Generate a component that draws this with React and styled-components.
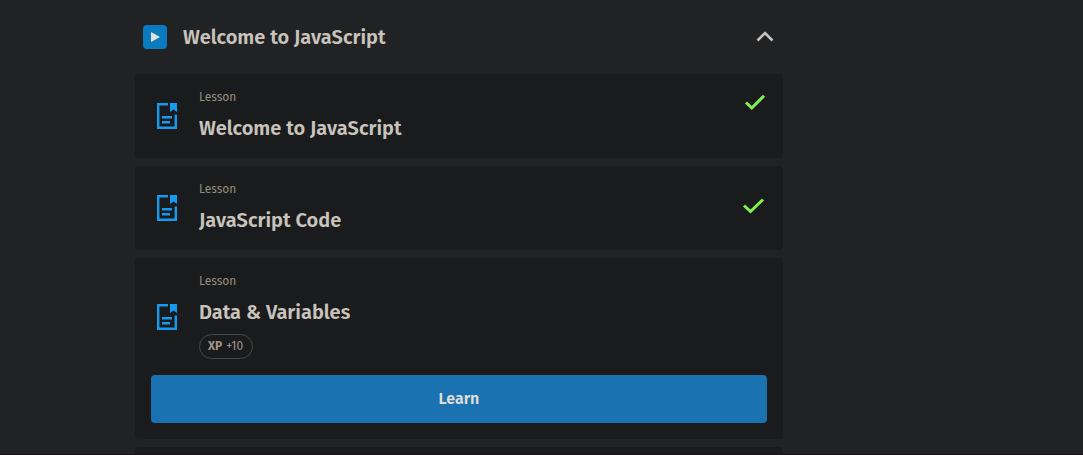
import React, { useState } from "react";
import styled, { createGlobalStyle } from "styled-components";

const GlobalStyle = createGlobalStyle`
  *, *::before, *::after { box-sizing: border-box; }
  html { height: 100%; }
  body {
    margin: 0;
    height: 100%;
    overflow: hidden;
    background: #202223;
    color: #c8c3bc;
    font-family: "Fira Sans", "Noto Sans", sans-serif;
  }
  #root { height: 100%; }
`;

const Page = styled.main`
  height: 100%;
  overflow: hidden;
  padding: 0 300px 0 135px;
  border-bottom: 1px solid #1a1216;
`;

const SectionToggle = styled.button`
  display: flex;
  align-items: center;
  gap: 16px;
  width: 100%;
  height: 74px;
  padding: 0 8px;
  border: 0;
  background: none;
  color: inherit;
  font: inherit;
  text-align: left;
  cursor: pointer;
`;

const PlayBadge = styled.span`
  display: flex;
  flex: none;
  width: 24px;
  height: 24px;
  border-radius: 4px;
  background: #0b7bbf;
`;

const Title = styled.span`
  flex: 1;
  font-size: 20px;
  font-weight: 600;
  line-height: 28px;
`;

const Chevron = styled.svg`
  flex: none;
  width: 20px;
  height: 20px;
  transform: ${({ $open }) => ($open ? "none" : "rotate(180deg)")};
`;

const LessonList = styled.ul`
  display: flex;
  flex-direction: column;
  gap: 8px;
  margin: 0;
  padding: 0;
  list-style: none;
`;

const Card = styled.li`
  display: flex;
  flex-direction: column;
  gap: 16px;
  min-height: 84px;
  padding: 16px;
  border-radius: 4px;
  background: #1a1b1c;
`;

const CardRow = styled.div`
  display: flex;
  align-items: center;
  gap: 16px;
`;

const LessonIcon = styled.svg`
  flex: none;
  width: 32px;
  height: 32px;
`;

const CardText = styled.div`
  display: flex;
  flex: 1;
  flex-direction: column;
  align-items: flex-start;
`;

const Kind = styled.span`
  margin-bottom: 10px;
  color: #968c7e;
  font-size: 12px;
  line-height: 14px;
`;

const LessonTitle = styled.h2`
  margin: 0;
  font-size: 20px;
  font-weight: 600;
  line-height: 28px;
`;

const XpBadge = styled.span`
  display: flex;
  align-items: center;
  gap: 4px;
  height: 25px;
  margin-top: 8px;
  padding: 0 9px 2px 8px;
  border: 1px solid #45494b;
  border-radius: 13px;
  color: #9f9689;
  font-size: 12px;
  line-height: 16px;
`;

const CheckMark = styled.svg`
  flex: none;
  align-self: ${({ $top }) => ($top ? "flex-start" : "center")};
  width: 24px;
  height: 24px;
`;

const LearnButton = styled.button`
  height: 48px;
  padding: 0 16px 2px;
  border: 0;
  border-radius: 4px;
  background: #1b72b1;
  color: #e0ddd9;
  font-family: inherit;
  font-size: 16px;
  font-weight: 600;
  cursor: pointer;
`;

const lessons = [
  { title: "Welcome to JavaScript", done: true, checkAtTop: true },
  { title: "JavaScript Code", done: true },
  { title: "Data & Variables", xp: 10 },
];

function DocumentIcon() {
  return (
    <LessonIcon viewBox="0 0 32 32" aria-hidden="true">
      <path d="M17 4.200H7.200V27.800H24.800V14.500" fill="none" stroke="#149af0" strokeWidth="2.4" />
      <path d="M19 3H26V12L22.5 9.5L19 12Z" fill="#149af0" />
      <path d="M11 17.200H21M11 22.200H19" stroke="#149af0" strokeWidth="2.400" />
    </LessonIcon>
  );
}

function Check({ top }) {
  return (
    <CheckMark $top={top} viewBox="0 0 24 24" role="img" aria-label="Completed">
      <path
        d={top ? "M3 12.5L8.800 18L21 5.800" : "M1 9.500L7.500 15.500L20 3.500"}
        fill="none"
        stroke="#83f052"
        strokeWidth="3"
      />
    </CheckMark>
  );
}

function Lesson({ lesson }) {
  return (
    <Card>
      <CardRow>
        <DocumentIcon />
        <CardText>
          <Kind>Lesson</Kind>
          <LessonTitle>{lesson.title}</LessonTitle>
          {lesson.xp && (
            <XpBadge>
              <b>XP</b>
              <span>+{lesson.xp}</span>
            </XpBadge>
          )}
        </CardText>
        {lesson.done && <Check top={lesson.checkAtTop} />}
      </CardRow>
      {lesson.xp && <LearnButton type="button">Learn</LearnButton>}
    </Card>
  );
}

export default function App() {
  const [open, setOpen] = useState(true);
  return (
    <>
      <GlobalStyle />
      <Page>
        <SectionToggle type="button" aria-expanded={open} onClick={() => setOpen(!open)}>
          <PlayBadge>
            <svg width="24" height="24" viewBox="0 0 24 24" aria-hidden="true">
              <path d="M8 7L17 12L8 17Z" fill="#e4e1dd" />
            </svg>
          </PlayBadge>
          <Title>Welcome to JavaScript</Title>
          <Chevron $open={open} viewBox="0 0 20 20" aria-hidden="true">
            <path d="M2.500 13.500L10 6L17.500 13.500" fill="none" stroke="#c8c3bc" strokeWidth="2.600" />
          </Chevron>
        </SectionToggle>
        {open && (
          <LessonList>
            {lessons.map((lesson) => (
              <Lesson key={lesson.title} lesson={lesson} />
            ))}
            <Card aria-busy="true" />
          </LessonList>
        )}
      </Page>
    </>
  );
}
